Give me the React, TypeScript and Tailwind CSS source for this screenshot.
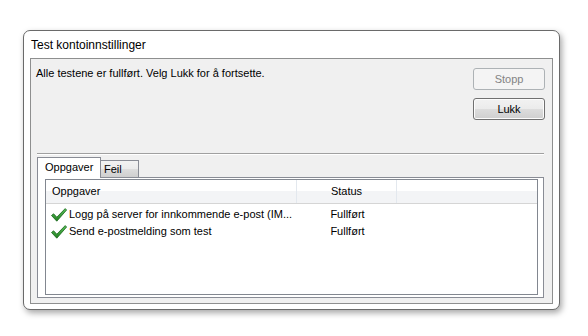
function Check() {
  return (
    <svg width="16" height="14" viewBox="0 0 16 14" className="shrink-0">
      <defs>
        <linearGradient id="chk" x1="0" y1="0" x2="0" y2="1">
          <stop offset="0" stopColor="#5cc25a" />
          <stop offset="1" stopColor="#1f7d1f" />
        </linearGradient>
      </defs>
      <polygon
        points="0.5,7.5 2.6,5.8 5.8,9.2 14.2,0.6 15.6,2 5.8,13.2"
        fill="url(#chk)"
        stroke="#17651a"
        strokeWidth="0.8"
        strokeLinejoin="round"
      />
    </svg>
  );
}

const rows = [
  { task: "Logg på server for innkommende e-post (IM...", status: "Fullført" },
  { task: "Send e-postmelding som test", status: "Fullført" },
];

export default function App() {
  return (
    <div
      className="w-[588px] h-[336px] bg-white pt-[30px] pl-[23px] text-[11px] text-black"
      style={{ fontFamily: '"Liberation Sans", Arial, sans-serif' }}
    >
      <div className="w-[537px] h-[280px] rounded-[7px] border border-[#6a6a6a] bg-white shadow-[2px_3px_6px_rgba(0,0,0,0.35)] flex flex-col px-[6px] pb-[5px]">
        <div className="h-[27px] flex items-center pl-px text-[12px]">Test kontoinnstillinger</div>

        <div className="flex-1 border border-[#8e8f8f] bg-[#f0f0f0] flex flex-col">
          <div className="h-[94px] flex justify-between items-start pl-[5px] pr-[7px]">
            <p className="pt-[7px] leading-[15px]">Alle testene er fullført. Velg Lukk for å fortsette.</p>
            <div className="pt-[9px] flex flex-col gap-[8px]">
              <button className="w-[72px] h-[22px] rounded-[3px] border border-[#adb2b5] bg-[#f4f4f4] text-[#838383]">
                Stopp
              </button>
              <button className="w-[72px] h-[22px] rounded-[3px] border border-[#707070] bg-[linear-gradient(to_bottom,#f2f2f2_0%,#ebebeb_50%,#dddddd_50%,#cfcfcf_100%)] shadow-[inset_0_0_0_1px_#fcfcfc]">
                Lukk
              </button>
            </div>
          </div>

          <div className="ml-[6px] mr-[8px] h-[2px] border-t border-[#a0a0a0] border-b border-b-white" />

          <div className="mt-[2px] ml-[6px] mr-[8px] h-[20px] flex items-start relative z-10">
            <div className="h-[21px] w-[64px] border border-b-0 border-[#898c95] bg-white flex items-center pl-[7px] pb-[2px]">
              Oppgaver
            </div>
            <div className="mt-[3px] h-[17px] w-[38px] border border-l-0 border-b-0 border-[#898c95] bg-[linear-gradient(to_bottom,#f2f2f2_0%,#ebebeb_50%,#dddddd_50%,#cfcfcf_100%)] flex items-center pl-[3px]">
              Feil
            </div>
          </div>

          <div className="ml-[6px] mr-[8px] h-[121px] border border-[#898c95] bg-white pt-px pl-[7px] pr-[5px] pb-[2px] flex">
            <div className="flex-1 border border-[#828790] bg-white flex flex-col">
              <div className="h-[24px] flex border-b border-[#d5d5d5] bg-[linear-gradient(to_bottom,#ffffff_0%,#ffffff_50%,#f3f4f6_50%,#f3f4f6_100%)]">
                <div className="w-[251px] flex items-center pl-[6px] border-r border-[#e3e8ee]">Oppgaver</div>
                <div className="w-[100px] flex items-center justify-center border-r border-[#e3e8ee]">Status</div>
                <div className="flex-1" />
              </div>
              <div className="pt-[2px] flex flex-col">
                {rows.map((r) => (
                  <div key={r.task} className="h-[17px] flex items-center">
                    <div className="w-[251px] flex items-center gap-[2px] pl-[5px]">
                      <Check />
                      <span className="whitespace-nowrap">{r.task}</span>
                    </div>
                    <div className="w-[100px] text-center pl-px">{r.status}</div>
                  </div>
                ))}
              </div>
            </div>
          </div>
        </div>
      </div>
    </div>
  );
}
